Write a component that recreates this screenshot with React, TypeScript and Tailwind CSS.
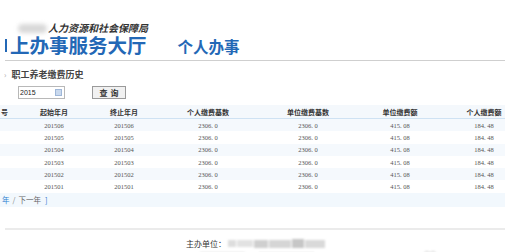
const rows = [
  { s: "201506", e: "201506" },
  { s: "201505", e: "201505" },
  { s: "201504", e: "201504" },
  { s: "201503", e: "201503" },
  { s: "201502", e: "201502" },
  { s: "201501", e: "201501" },
];

const cols = ["w-[40px]", "w-[68px]", "w-[72px]", "w-[96px]", "w-[104px]", "w-[80px]", "w-[88px]"];
const heads = ["号", "起始年月", "终止年月", "个人缴费基数", "单位缴费基数", "单位缴费额", "个人缴费额"];

function Cells({ values, className }: { values: string[]; className: string }) {
  return (
    <>
      {values.map((v, i) => (
        <div key={i} className={`${cols[i]} shrink-0 ${i === 0 ? "text-left pl-[21px]" : "text-center"} ${className}`}>
          {v}
        </div>
      ))}
    </>
  );
}

export default function App() {
  return (
    <div className="w-[518px] h-[252px] overflow-hidden bg-white font-['Noto_Sans_CJK_SC',sans-serif] relative">
      {/* Header */}
      <div className="h-[23px]" />
      <div className="flex items-center h-[10px] pl-[18px]">
        <div className="w-[29px] h-[9px] rounded-full bg-[#d8d8d8] blur-[2px]" />
        <div className="ml-[1px] text-[10px] leading-[10px] font-bold italic text-[#333]">人力资源和社会保障局</div>
      </div>
      <div className="flex items-center h-[20px] pl-[5px] mt-[2px]">
        <div className="w-[2px] h-[13px] bg-[#2368b6]" />
        <div className="ml-[3px] text-[19.5px] leading-[20px] font-bold text-[#2368b6]">上办事服务大厅</div>
        <div className="ml-[31px] mt-[2px] text-[15.5px] leading-[16px] font-bold text-[#2368b6]">个人办事</div>
      </div>
      <div className="mt-[5px] ml-[5px] w-[500px] h-[1px] bg-[#cfcfcf]" />

      {/* Section title */}
      <div className="flex items-center h-[10px] mt-[9px] pl-[4px]">
        <div className="text-[8px] leading-[8px] text-[#aaa]">›</div>
        <div className="ml-[5px] text-[9px] leading-[10px] font-bold text-[#444]">职工养老缴费历史</div>
      </div>

      {/* Query */}
      <div className="flex items-center mt-[6px] h-[13px]">
        <div className="ml-[18px] w-[47px] h-[13px] border border-[#b8b8b8] flex items-center pl-[1px] relative">
          <span className="text-[7px] leading-[7px] font-['Liberation_Sans',sans-serif] text-[#222]">2015</span>
          <div className="absolute right-[2px] top-[2px] w-[7px] h-[7px] bg-[#c9d9ee] border border-[#9fb7d8]" />
        </div>
        <div className="ml-[27px] w-[34px] h-[13px] border border-[#9a9a9a] bg-[#f1f1f1] flex items-center justify-center">
          <span className="text-[8px] leading-[8px] font-bold text-[#333] tracking-[3px] pl-[3px]">查询</span>
        </div>
      </div>

      {/* Table */}
      <div className="mt-[6px] w-[505px] overflow-hidden">
        <div className="ml-[-20px] w-[548px]">
          <div className="flex items-center h-[14px] bg-[#f4f8fc] border-b border-[#cfe2f3]">
            <Cells values={heads} className="text-[7px] leading-[8px] font-bold text-[#333]" />
          </div>
          {rows.map((r, i) => (
            <div key={r.s} className={`flex items-center h-[12.3px] ${i % 2 === 0 ? "bg-[#f5f9fd]" : "bg-white"}`}>
              <Cells
                values={["", r.s, r.e, "2306. 0", "2306. 0", "415. 08", "184. 48"]}
                className="text-[6.5px] leading-[7px] font-['Liberation_Serif',serif] text-[#555]"
              />
            </div>
          ))}
          <div className="flex items-center h-[14px] bg-[#f2f8fd] pl-[22px] text-[7.5px] leading-[8px]">
            <span className="text-[#2f7fd1]">年</span>
            <span className="text-[#888] mx-[3px]">/</span>
            <span className="text-[#666]">下一年</span>
            <span className="text-[#2f7fd1] ml-[4px]">]</span>
          </div>
        </div>
      </div>

      {/* Footer */}
      <div className="mt-[21px] ml-[5px] w-[500px] h-[2px] bg-[#ebebeb]" />
      <div className="flex items-center h-[10px] mt-[9px] pl-[186px]">
        <span className="text-[8px] leading-[8px] text-[#333]">主办单位：</span>
        <div className="ml-[2px] flex items-center gap-[1px] blur-[1px]">
          <div className="w-[8px] h-[7px] bg-[#ddd]" />
          <div className="w-[16px] h-[7px] bg-[#e2e2e2]" />
          <div className="w-[14px] h-[8px] bg-[#cfcfcf]" />
          <div className="w-[22px] h-[8px] bg-[#d5d5d5]" />
          <div className="w-[12px] h-[9px] bg-[#c6c6c6]" />
          <div className="w-[20px] h-[8px] bg-[#d9d9d9]" />
        </div>
      </div>
      <div className="flex items-center h-[6px] mt-[2px] pl-[200px] blur-[1px]">
        <div className="w-[45px] h-[4px] bg-[#e8e8e8]" />
        <div className="ml-[14px] w-[55px] h-[4px] bg-[#ececec]" />
        <div className="ml-[110px] w-[6px] h-[6px] rounded-full border border-[#ccc]" />
        <div className="w-[6px] h-[6px] rounded-full border border-[#ccc]" />
      </div>
    </div>
  );
}
